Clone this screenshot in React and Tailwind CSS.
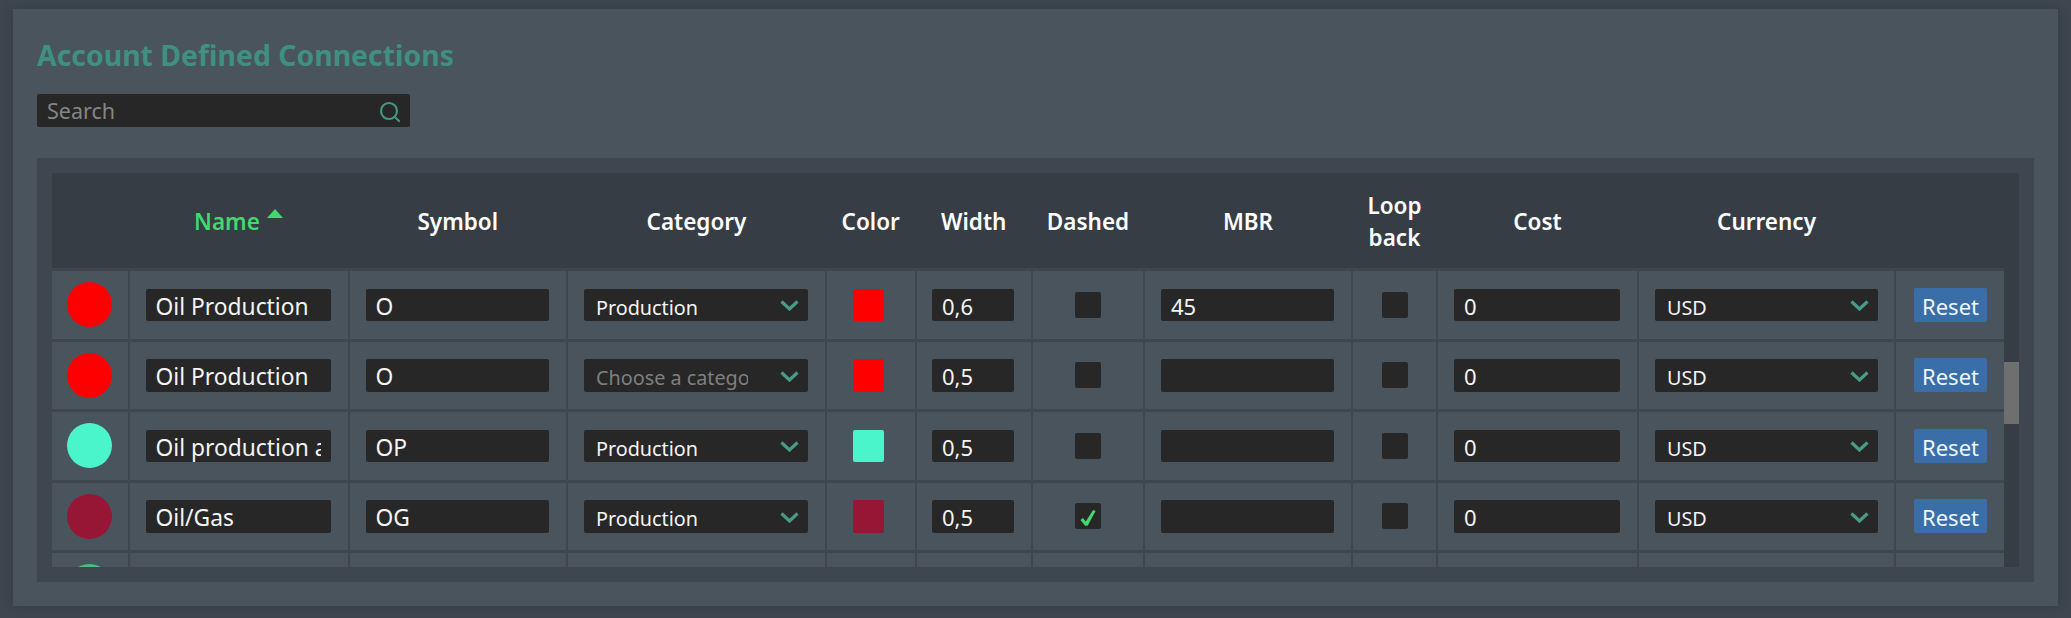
import React from "react";
import { Search } from "lucide-react";

const gridCols =
  "grid grid-cols-[75.5px_218px_216.5px_257px_87.5px_114.5px_110px_206px_83px_199px_255px_108px] gap-x-[2px]";

const rows = [
  { color: "#ff0000", name: "Oil Production", symbol: "O", category: "Production", width: "0,6", dashed: false, mbr: "45", cost: "0" },
  { color: "#ff0000", name: "Oil Production", symbol: "O", category: "", width: "0,5", dashed: false, mbr: "", cost: "0" },
  { color: "#4bf5cc", name: "Oil production and gas", symbol: "OP", category: "Production", width: "0,5", dashed: false, mbr: "", cost: "0" },
  { color: "#971535", name: "Oil/Gas", symbol: "OG", category: "Production", width: "0,5", dashed: true, mbr: "", cost: "0" },
  { color: "#4dbb7a", name: "", symbol: "", category: "", width: "", dashed: false, mbr: "", cost: "" },
];

const inputClass =
  "block h-[32.5px] w-full rounded-[2px] bg-[#272727] pl-[10px] pr-[10px] pt-[4px] text-[22.8px] text-[#f4f4f4] outline-none";
const numberClass =
  "block h-[32.5px] w-full rounded-[2px] bg-[#272727] pl-[10px] pr-[10px] pt-[3px] text-[22px] text-[#f4f4f4] outline-none";

function Chevron() {
  return (
    <svg className="pointer-events-none absolute right-[9px] top-[11.5px] h-[11px] w-[19px]" viewBox="0 0 19 11" fill="none" stroke="#4a9a88" strokeWidth="3.2">
      <path d="M1.5 1.5 L9.5 9 L17.5 1.5" />
    </svg>
  );
}

function Dropdown({ value, options }) {
  return (
    <div className="relative w-full">
      <select
        defaultValue={value}
        className={`block h-[32.5px] w-full appearance-none rounded-[2px] bg-[#272727] pl-[12px] pr-[60px] pt-[4px] text-[19.8px] outline-none ${value ? "text-[#f4f4f4]" : "text-[#7f7f7f]"}`}
      >
        {options.map((o) => (
          <option key={o.value} value={o.value}>{o.label}</option>
        ))}
      </select>
      <Chevron />
    </div>
  );
}

function Box({ checked }) {
  return (
    <div className="h-[26px] w-[26px] rounded-[2px] bg-[#272727]">
      {checked && (
        <svg className="h-full w-full" viewBox="105 68 78 82">
          <path d="M120 122 L128 115 L137 126 L160 90 L168 93 L143 140 L135 140 Z" fill="#44d670" />
        </svg>
      )}
    </div>
  );
}

const cell = "flex items-center bg-[#4a545d] pl-4 pr-[17px]";
const cellCenter = "flex items-center justify-center bg-[#4a545d]";

function Header({ children, active }) {
  return (
    <div className={`flex items-center justify-center pt-[2px] text-center text-[22.5px] font-semibold leading-[32px] ${active ? "text-[#44d670]" : "text-white"}`}>
      {children}
    </div>
  );
}

export default function App() {
  return (
    <div className="h-[618px] w-[2071px] overflow-hidden bg-[#3e4750] pl-[13px] pt-[9px] font-['Noto_Sans',sans-serif]">
      <div className="h-[597px] w-[2045px] bg-[#4a545d] pl-[24px] pt-[28px] shadow-[0_0_12px_rgba(0,0,0,0.18)]">
        <h1 className="text-[28.4px] font-bold leading-[36px] text-[#3f9080]">Account Defined Connections</h1>
        <div className="relative mt-[21px] h-[33px] w-[373px] rounded-[2px] bg-[#272727]">
          <input placeholder="Search" className="block h-full w-full pl-[10px] pr-[40px] text-[21.5px] text-white outline-none placeholder:text-[#858585]" />
          <Search className="absolute right-[8px] top-[6px] text-[#469584]" size={24} strokeWidth={2.2} />
        </div>
        <div className="mt-[31px] h-[424px] w-[1996.5px] bg-[#3e4750] p-[15px]">
          <div className="flex h-[394px] overflow-hidden">
            <div className="w-[1952px] shrink-0">
              <div className={`${gridCols} h-[95px] bg-[#363d44]`}>
                <Header />
                <Header active>
                  <span>Name</span>
                  <svg className="mb-[16px] ml-[7px] h-[9px] w-[16px]" viewBox="0 0 16 9"><path d="M8 0 L16 9 L0 9 Z" fill="#44d670" /></svg>
                </Header>
                <Header>Symbol</Header>
                <Header>Category</Header>
                <Header>Color</Header>
                <Header>Width</Header>
                <Header>Dashed</Header>
                <Header>MBR</Header>
                <Header>Loop<br />back</Header>
                <Header>Cost</Header>
                <Header>Currency</Header>
                <Header />
              </div>
              <div className={`${gridCols} mt-[3px] auto-rows-[67.5px] gap-y-[3px]`}>
                {rows.map((r, i) => (
                  <React.Fragment key={i}>
                    <div className={cellCenter}>
                      <div className="h-[45px] w-[45px] rounded-full" style={{ backgroundColor: r.color }} />
                    </div>
                    <div className={cell}>{i < 4 && <input readOnly defaultValue={r.name} className={inputClass} />}</div>
                    <div className={cell}>{i < 4 && <input readOnly defaultValue={r.symbol} className={inputClass} />}</div>
                    <div className={cell}>
                      {i < 4 && (
                        <Dropdown
                          value={r.category}
                          options={[
                            { value: "", label: "Choose a category" },
                            { value: "Production", label: "Production" },
                          ]}
                        />
                      )}
                    </div>
                    <div className="flex items-center bg-[#4a545d] pl-[25.5px]">
                      {i < 4 && <div className="h-[32.5px] w-[31px] rounded-[2px]" style={{ backgroundColor: r.color }} />}
                    </div>
                    <div className="flex items-center bg-[#4a545d] pl-[15.5px] pr-[17px]">{i < 4 && <input readOnly defaultValue={r.width} className={numberClass} />}</div>
                    <div className={cellCenter}>{i < 4 && <Box checked={r.dashed} />}</div>
                    <div className={cell}>{i < 4 && <input readOnly defaultValue={r.mbr} className={numberClass} />}</div>
                    <div className={cellCenter}>{i < 4 && <Box />}</div>
                    <div className={cell}>{i < 4 && <input readOnly defaultValue={r.cost} className={numberClass} />}</div>
                    <div className="flex items-center bg-[#4a545d] pl-4 pr-4">
                      {i < 4 && <Dropdown value="USD" options={[{ value: "USD", label: "USD" }]} />}
                    </div>
                    <div className="flex items-center bg-[#4a545d] pl-[18px]">
                      {i < 4 && (
                        <button className="h-[34px] w-[73px] rounded-[2px] bg-[#3a6ea8] pt-[2px] text-[22px] text-[#f0f6fb]">Reset</button>
                      )}
                    </div>
                  </React.Fragment>
                ))}
              </div>
            </div>
            <div className="w-[14.5px] shrink-0 bg-[#363d44] pt-[189px]">
              <div className="h-[62px] w-full bg-[#6f6f6f]" />
            </div>
          </div>
        </div>
      </div>
    </div>
  );
}
